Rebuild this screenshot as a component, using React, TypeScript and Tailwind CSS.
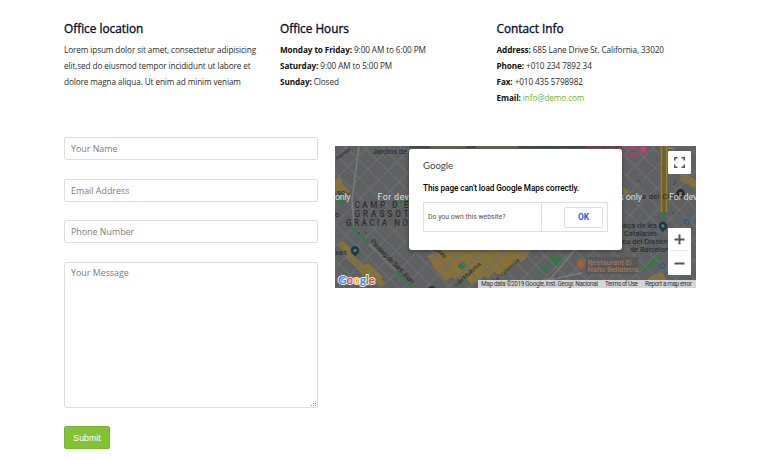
import React from 'react';

const HEADING = 'whitespace-nowrap text-[11.8px] font-normal leading-[15px] text-[#060d2e] [-webkit-text-stroke:0.35px_#060d2e]';
const BODY = 'mt-[6px] whitespace-nowrap text-[8.2px] leading-4 tracking-[-0.1px] text-[#2b2b2b]';
const FIELD =
  'block w-full rounded-[2px] border border-[#dedede] bg-white px-1.5 text-[8.9px] text-[#333] outline-none placeholder:text-[#7d7d7d]';

function Row({ label, children }: { label: string; children: React.ReactNode }) {
  return (
    <p>
      <b className="font-bold text-[#101010]">{label}</b> {children}
    </p>
  );
}

const streetsDown = [-132, -114, -96, -78, -44, -26, -8, 10, 28, 46, 64, 82, 100, 118, 136, 154, 172, 190, 208, 226, 244, 262, 280, 298, 316, 334, 352];
const streetsUp = [12, 34, 56, 78, 100, 122, 144, 166, 188, 210, 232, 254, 276, 298, 320, 342, 364, 386, 408, 430, 452, 474, 496];

function Pin({ x, y, color }: { x: number; y: number; color: string }) {
  return (
    <g>
      <path d={`M${x} ${y + 5.5}L${x - 3} ${y + 2.5}A4.3 4.3 0 1 1 ${x + 3} ${y + 2.5}Z`} fill={color} />
      <circle cx={x} cy={y - 0.6} r="1.6" fill="#737677" />
    </g>
  );
}

function CityMap() {
  return (
    <svg className="block h-[142px] w-[361px]" viewBox="335 146 361 142" fontFamily="Roboto, sans-serif">
      <rect x="335" y="146" width="361" height="142" fill="#5f6062" />
      {/* Eixample blocks */}
      <g fill="#86723a">
        <path d="M335 180l5-3 3 7 7 7-4 5-11-6zM338 244l5-3 9 9 3 7 9 8 5-2 14 14-5 6-10-9-5 2-7-9-10-9zM373 278l5-3 7 8-4 4z" />
        <path d="M427 256l13-6h22l9 9 8 3 9 9-4 6-12 8-8-9-10 3-8-11-8 4zM456 250h76l-8 10-6 3-9 8-6 6-9-5-6 7-9-9-8-6zM431 265l7-3 15 14-7 5z" />
        <path d="M681 174l7 1 8 5v8l-16-7zM648 278l14-7 5 11h-18zM623 186l6 6-6 5z" />
      </g>
      {/* Parks */}
      <g fill="#3a7249">
        <path d="M335 198l8-2 3 6-5 2-6-2zM536 273l10-8 2 6-4 2zM547 265l5-11 17 8-15 4zM457 266l5-5 5 4-5 5zM640 268l17-13 5 2-2 5-18 10z" />
        <path d="M392 205l15-9 2 9z" />
      </g>
      {/* City streets */}
      <g stroke="#6d6e70" strokeWidth="1.1">
        {streetsDown.map((d) => (
          <path key={d} d={`M${335 + d} 146l142 142`} />
        ))}
        {streetsUp.map((d) => (
          <path key={d} d={`M${335 + d} 146l-142 142`} />
        ))}
      </g>
      <g fill="none" stroke="#77787a" strokeWidth="1.8">
        <path d="M359 146l-7 54 2 25M522 285l60-12M545 285l31-36" />
      </g>
      <path d="M351 226l62 62" stroke="#6b716d" strokeWidth="2.6" />
      <path d="M351 226l18 18M396 271l17 17" stroke="#37704a" strokeWidth="2.2" />
      <path d="M409 146h152v2H409z" fill="#3f5040" />
      <path d="M561 146h61v2h-61z" fill="#44484a" />
      <path d="M430 147h36m10 0h42" stroke="#77724a" strokeWidth="1.3" />
      <path d="M660 146h8v66h-8z" fill="#6b6138" />
      <path d="M661.5 146v66M666.5 146v66M668 148h6" stroke="#9a7f2c" strokeWidth="1.5" />
      <path d="M662 212h5l-1 8h-3z" fill="#3a7249" />

      {/* Place names */}
      <g fill="#25272a" fontSize="7.6">
        <text x="372.5" y="154.4" textLength="34.5">Jardins de</text>
        <text x="335" y="254.8">xas</text>
        <text transform="translate(370 242) rotate(45.5)" textLength="59" fontSize="7">Passeig de Sant Joan</text>
        <text transform="translate(457 287) rotate(-43)" textLength="33" fontSize="6">r de Mallorca</text>
        <text transform="translate(495 284) rotate(-43)" textLength="34" fontSize="6">de València</text>
        <text transform="translate(430 245) rotate(43)" textLength="20" fontSize="6">ragonés</text>
        <text transform="translate(337 160) rotate(-35)" textLength="17" fontSize="5">Asturias</text>
        <text x="337" y="194.5">sc</text>
        <text x="335" y="216.5">o</text>
        <text x="642" y="199" textLength="35">a del Clot</text>
        <text x="621" y="228.3" textLength="36">laça de les</text>
        <text x="624" y="235.8" textLength="33">Catalanes</text>
        <text x="618" y="244.3" textLength="53">seu del Disseny</text>
        <text x="630" y="251.5" textLength="43">de Barcelona</text>
      </g>
      <g fill="#2e3033" fontSize="8.2" fontWeight="500">
        <text x="354.5" y="208.2" textLength="54">CAMP D'E</text>
        <text x="354.5" y="217" textLength="54">GRASSOT</text>
        <text x="346" y="226.4" textLength="62">GRÀCIA NO</text>
      </g>
      <g fill="#a84570" fontSize="7">
        <text x="586" y="149.4" textLength="51">Hotel Catalonia</text>
        <text x="622" y="156.6" textLength="15">milia</text>
      </g>
      <path d="M586 257h52v17h-52z" fill="#545557" opacity=".8" />
      <g fill="#b07a5c" fontSize="7.6">
        <text x="587.5" y="264.6" textLength="44">Restaurant El</text>
        <text x="587.5" y="272" textLength="51">Ñaño Bellaterra</text>
      </g>
      <Pin x={355} y={251} color="#173c43" />
      <Pin x={432} y={291} color="#173c43" />
      <Pin x={643} y={149} color="#a84570" />
      <Pin x={581} y={264} color="#a85a32" />
      <Pin x={663} y={226.5} color="#173c43" />
      <Pin x={680.5} y={194} color="#252a2d" />
      <g fill="none" stroke="#2c5d83" strokeWidth="1.4">
        <circle cx="687" cy="222" r="2.3" />
        <circle cx="662.5" cy="266" r="2.3" />
      </g>
      <g fill="none" stroke="#37393b" strokeWidth=".8">
        <path d="M357 235l3-3M364 231l3 3M638 180l3 3M555 278l3-2M672 212l2 2M673 186l3-6M345 192l5 3" />
      </g>

      {/* Development watermark */}
      <g fill="#dedede" fontSize="9">
        <text x="335" y="199.5" textLength="15.5">only</text>
        <text x="377.5" y="199.5" textLength="114">For development purposes</text>
        <text x="619" y="199.5" textLength="23">s only</text>
        <text x="669" y="199.5" textLength="35">For devel</text>
      </g>

      {/* Map brand and attribution */}
      <text x="338" y="284.3" textLength="37" fontFamily="Lato, sans-serif" fontSize="12" fontWeight="700" stroke="#eee" strokeWidth="1.8" paintOrder="stroke" strokeLinejoin="round">
        <tspan fill="#4285f4">G</tspan><tspan fill="#ea4335">o</tspan><tspan fill="#fbbc05">o</tspan><tspan fill="#4285f4">g</tspan><tspan fill="#34a853">l</tspan><tspan fill="#ea4335">e</tspan>
      </text>
      <path d="M478 280h218v8H478z" fill="#d5d5d5" />
      <g fill="#333" fontSize="6.4">
        <text x="481" y="286.4" textLength="117">Map data ©2019 Google, Inst. Geogr. Nacional</text>
        <text x="605" y="286.4" textLength="33">Terms of Use</text>
        <text x="645" y="286.4" textLength="47">Report a map error</text>
      </g>
    </svg>
  );
}

function MapDialog() {
  return (
    <div className="absolute left-[74px] top-[3px] h-[101px] w-[213px] rounded-[3px] bg-white px-[14px] pt-[10px] font-[Roboto,sans-serif] shadow-[0_1px_4px_rgba(0,0,0,0.4)]">
      <p className="font-[Lato,sans-serif] text-[9.6px] leading-[13px] text-[#444]">Google</p>
      <p className="mt-[10px] whitespace-nowrap text-[8.2px] font-medium leading-[12px] tracking-[-0.07px] text-black">This page can't load Google Maps correctly.</p>
      <div className="mt-[8px] flex h-[30px] w-[185px] border border-[#dfdfdf]">
        <div className="flex w-[118px] items-center whitespace-nowrap border-r border-[#dfdfdf] pl-1 text-[6.9px] text-[#555]">
          Do you own this website?
        </div>
        <div className="flex flex-1 items-center justify-end pr-1">
          <button className="h-[21px] w-[39px] rounded-[2px] border border-[#dadce0] text-[8.4px] font-bold text-[#1c62e0]">OK</button>
        </div>
      </div>
    </div>
  );
}

function MapControls() {
  return (
    <div className="absolute right-[5px] top-[5px] flex flex-col gap-[54px]">
      <button className="flex h-[23px] w-[23px] items-center justify-center rounded-[1px] bg-white">
        <svg className="h-[11px] w-[11px]" viewBox="0 0 11 11" fill="none" stroke="#555" strokeWidth="1.5">
          <path d="M.75 3.5V.75H3.5M7.5.75h2.75V3.5M10.25 7.5v2.75H7.5M3.5 10.25H.75V7.5" />
        </svg>
      </button>
      <div className="flex h-[47px] w-[23px] flex-col items-center rounded-[1px] bg-white">
        <button className="flex h-[23px] w-[17px] items-center justify-center border-b border-[#e6e6e6]">
          <svg className="h-[11px] w-[11px]" viewBox="0 0 11 11" stroke="#555" strokeWidth="2">
            <path d="M.5 5.5h10M5.5.5v10" />
          </svg>
        </button>
        <button className="flex h-[24px] w-[17px] items-center justify-center">
          <svg className="h-[11px] w-[11px]" viewBox="0 0 11 11" stroke="#555" strokeWidth="2">
            <path d="M.5 5.5h10" />
          </svg>
        </button>
      </div>
    </div>
  );
}

export default function App() {
  return (
    <main className="h-[460px] w-[760px] overflow-hidden bg-white pl-16 pt-[21px] font-['Open_Sans',sans-serif]">
      <section className="grid h-[116px] grid-cols-[216px_216.5px_200px]">
        <div>
          <h2 className={HEADING}>Office location</h2>
          <div className={BODY}>
            <p>Lorem ipsum dolor sit amet, consectetur adipisicing</p>
            <p>elit,sed do eiusmod tempor incididunt ut labore et</p>
            <p>dolore magna aliqua. Ut enim ad minim veniam</p>
          </div>
        </div>
        <div>
          <h2 className={HEADING}>Office Hours</h2>
          <div className={BODY}>
            <Row label="Monday to Friday:">9:00 AM to 6:00 PM</Row>
            <Row label="Saturday:">9:00 AM to 5:00 PM</Row>
            <Row label="Sunday:">Closed</Row>
          </div>
        </div>
        <div>
          <h2 className={HEADING}>Contact Info</h2>
          <div className={BODY}>
            <Row label="Address:">685 Lane Drive St. California, 33020</Row>
            <Row label="Phone:">+010 234 7892 34</Row>
            <Row label="Fax:">+010 435 5798982</Row>
            <Row label="Email:"><a className="text-[#70b52b]">info@demo.com</a></Row>
          </div>
        </div>
      </section>
      <section className="flex items-start gap-[17px]">
        <form className="w-[254px]">
          <div className="flex flex-col gap-[18.5px]">
            <input className={`${FIELD} h-[23px]`} placeholder="Your Name" />
            <input className={`${FIELD} h-[23px]`} placeholder="Email Address" />
            <input className={`${FIELD} h-[23px]`} placeholder="Phone Number" />
            <div className="relative">
              <textarea className={`${FIELD} h-[146px] resize-none pt-[3px]`} placeholder="Your Message" />
              <svg className="absolute bottom-[2px] right-[2px] h-[5px] w-[5px]" viewBox="0 0 5 5" fill="#999">
                <path d="M4 0h1v1H4zM2 2h1v1H2zM4 2h1v1H4zM0 4h1v1H0zM2 4h1v1H2zM4 4h1v1H4z" />
              </svg>
            </div>
          </div>
          <button type="button" className="mt-[18px] block h-[23px] w-[46px] rounded-[2px] border border-[#78b52b] bg-[#82c236] pt-[2px] font-['Liberation_Sans',sans-serif] text-[8.8px] leading-none text-white">
            Submit
          </button>
        </form>
        <div className="relative mt-[9px] h-[142px] w-[361px] overflow-hidden">
          <CityMap />
          <MapDialog />
          <MapControls />
        </div>
      </section>
    </main>
  );
}
